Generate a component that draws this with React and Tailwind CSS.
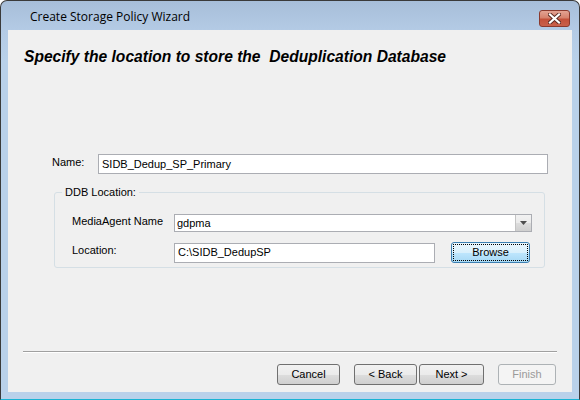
const font = { fontFamily: '"Liberation Sans", Arial, sans-serif' };

const WinButton = ({ children, disabled, className = '' }) => (
  <div
    className={`h-[21px] flex items-center justify-center rounded-[3px] border text-[11px] ${
      disabled
        ? 'border-[#adb2b5] bg-[#f4f4f4] text-[#9a9a9a]'
        : 'border-[#707070] bg-[linear-gradient(#f2f2f2_0%,#ebebeb_50%,#dddddd_51%,#cfcfcf_100%)] text-black'
    } ${className}`}
  >
    {children}
  </div>
);

const Field = ({ value, className = '' }) => (
  <div className={`h-[20px] border border-[#abadb3] bg-white flex items-center pl-[3px] text-[11px] text-black ${className}`}>
    {value}
  </div>
);

export default function App() {
  return (
    <div className="w-[580px] h-[400px] bg-white" style={font}>
      <div className="w-[580px] h-[400px] border border-[#3a3a3a] border-b-[#1ab3d3] rounded-t-[7px] bg-[linear-gradient(#a7bed9_0px,#b4cbe5_30px,#b9d1ea_60px)] flex flex-col">
        {/* title bar */}
        <div className="h-[29px] flex items-start pl-[29px] pr-[9px]">
          <div className="pt-[7px] text-[12px] text-black" style={{ fontFamily: '"Open Sans", "Noto Sans", sans-serif' }}>
            Create Storage Policy Wizard
          </div>
          <div className="ml-auto mt-[9px] w-[31px] h-[17px] rounded-[3px] border border-[#8b3a2e] bg-[linear-gradient(#e3a393_0%,#d6826d_45%,#c4513a_55%,#c9614b_100%)] flex items-center justify-center">
            <svg width="13" height="11" viewBox="0 0 13 11">
              <path d="M2 1.5 L11 9.5 M11 1.5 L2 9.5" stroke="#5a2a22" strokeWidth="4" strokeLinecap="square" />
              <path d="M2 1.5 L11 9.5 M11 1.5 L2 9.5" stroke="#ffffff" strokeWidth="2.2" strokeLinecap="square" />
            </svg>
          </div>
        </div>

        {/* client area */}
        <div className="mx-[7px] h-[362px] bg-[#f0f0f0] flex flex-col">
          <div className="pl-[16px] pt-[18px] h-[124px]">
            <div className="text-[15.6px] font-bold italic text-black whitespace-pre leading-[18px]">
              Specify the location to store the  Deduplication Database
            </div>
          </div>

          <div className="flex items-center pl-[44px] h-[20px]">
            <div className="w-[46px] text-[11px] text-black -mt-[4px]">Name:</div>
            <Field value="SIDB_Dedup_SP_Primary" className="w-[450px]" />
          </div>

          {/* group box */}
          <div className="relative ml-[46px] mt-[18px] w-[491px] h-[76px] rounded-[3px] border border-[#d5dfe5]">
            <div className="absolute -top-[7px] left-[7px] px-[3px] bg-[#f0f0f0] text-[11px] text-black leading-[13px]">
              DDB Location:
            </div>
            <div className="flex items-center pl-[17px] pt-[21px]">
              <div className="w-[102px] text-[11px] text-black -mt-[4px]">MediaAgent Name</div>
              <div className="w-[358px] h-[18px] border border-[#abadb3] bg-white flex items-center">
                <div className="flex-1 pl-[2px] text-[11px] text-black">gdpma</div>
                <div className="w-[16px] h-[16px] border-l border-[#c4c4c4] bg-[linear-gradient(#f2f2f2_0%,#ebebeb_50%,#dddddd_51%,#cfcfcf_100%)] flex items-center justify-center">
                  <svg width="7" height="4" viewBox="0 0 7 4">
                    <path d="M0 0 H7 L3.5 4 Z" fill="#4d4d4d" />
                  </svg>
                </div>
              </div>
            </div>
            <div className="flex items-center pl-[17px] pt-[10px]">
              <div className="w-[102px] text-[11px] text-black -mt-[4px]">Location:</div>
              <Field value="C:\SIDB_DedupSP" className="w-[261px]" />
              <div className="ml-[16px] w-[79px] h-[21px] rounded-[3px] border border-[#3c7fb1] bg-[linear-gradient(#eaf6fd_0%,#d9f0fc_50%,#bee6fd_51%,#a7d9f5_100%)] p-[1px]">
                <div className="w-full h-full border border-dotted border-black flex items-center justify-center text-[11px] text-black">
                  Browse
                </div>
              </div>
            </div>
          </div>

          {/* separator */}
          <div className="mt-[83px] mx-[15px] h-[2px] border-t border-[#a0a0a0] border-b border-b-white" />

          <div className="flex pl-[269px] pt-[11px]">
            <WinButton className="w-[63px]">Cancel</WinButton>
            <WinButton className="ml-[14px] w-[63px]">&lt; Back</WinButton>
            <WinButton className="ml-[2px] w-[65px]">Next &gt;</WinButton>
            <WinButton disabled className="ml-[14px] w-[58px]">Finish</WinButton>
          </div>
        </div>
      </div>
    </div>
  );
}
